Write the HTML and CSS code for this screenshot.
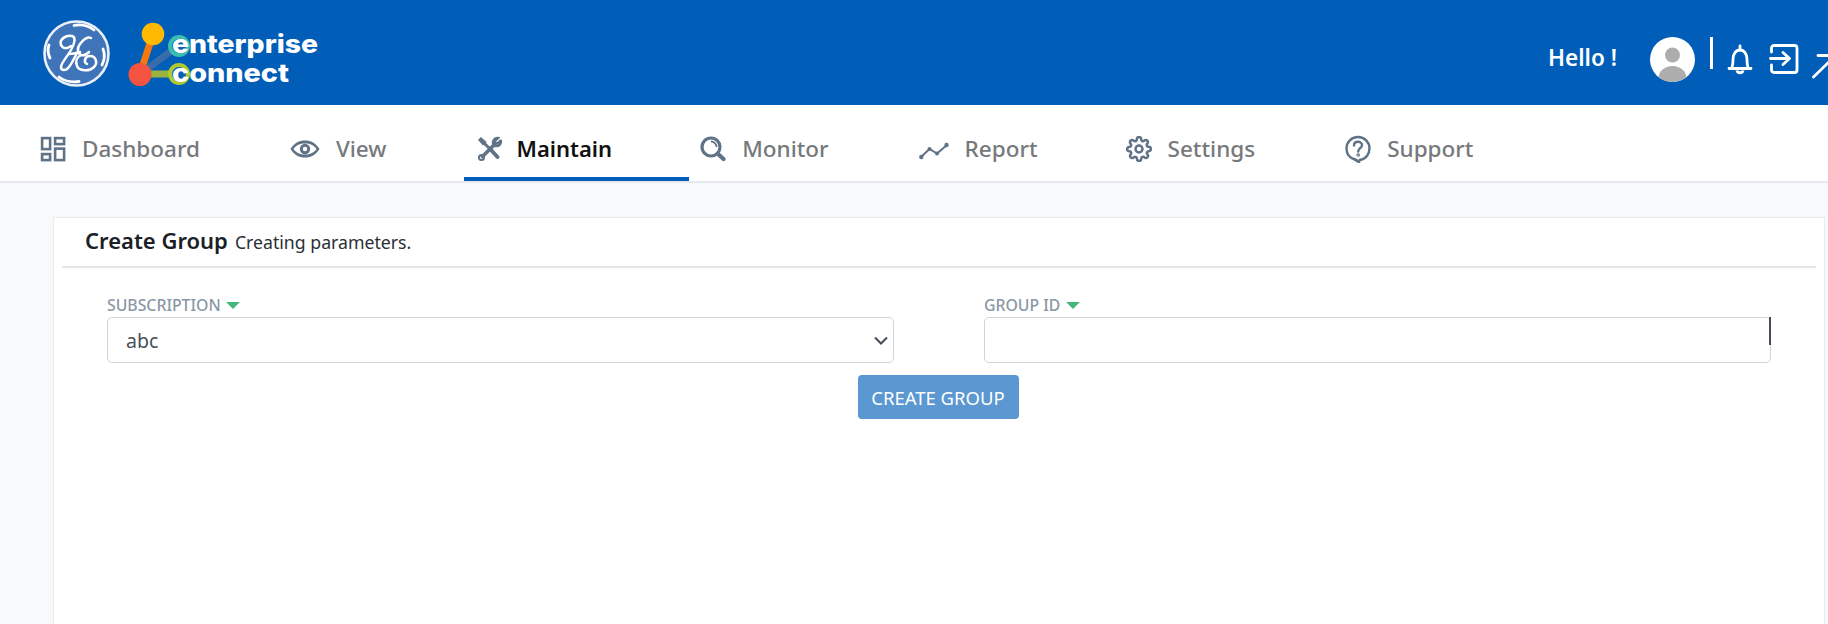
FILE: index.html
```html
<!DOCTYPE html>
<html lang="en">
<head>
<meta charset="utf-8">
<title>Create Group</title>
<link rel="stylesheet" href="styles.css">
</head>
<body>
<header class="topbar">
  <div class="brand">
    <svg class="ge-logo" width="68" height="68" viewBox="31 18 68 68" aria-label="GE">
      <circle cx="65.500" cy="52.500" r="32" fill="#3f74b9" stroke="#e9f0f8" stroke-width="2.600"/>
      <g fill="none" stroke="#fff" stroke-linecap="round">
        <path stroke-width="2.800" d="M63 24.500C70 23 78 25 83 29M68 80.500C60 81.500 53 80 48 76M38 44C36.500 48 37 53 39 57M92 48C94 53 94 58 91 64"/>
        <g stroke-width="2.500">
          <path d="M50 44C48 38 55 34 61 35C65 36 64 42 60 49C56 56 50 62 50 66C50 70 55 70 58 66C61 62 64 56 66 52"/>
          <path d="M50 44C52 48 56 48 60 45"/>
          <path d="M58 53C62 53 66 52 69 51"/>
          <path d="M80 37C76 35 72 39 69 43C66 47 66 52 70 54C73 55 76 53 78 51"/>
          <path d="M70 54C66 56 64 60 66 65C68 70 78 71 83 66C87 62 85 55 79 55C74 55 72 61 76 63"/>
        </g>
      </g>
    </svg>
    <svg class="ec-logo" width="194" height="72" viewBox="128 15 194 72" aria-label="enterprise connect">
      <path d="M153 32L140 72" stroke="#f47a10" stroke-width="7"/>
      <path d="M140 72L178 44" stroke="#3a6cab" stroke-width="7"/>
      <path d="M140 72H178" stroke="#9ab33c" stroke-width="7"/>
      <circle cx="153" cy="32" r="11.300" fill="#ffb900"/>
      <circle cx="140" cy="72.500" r="11.500" fill="#f4533f"/>
      <circle cx="179" cy="44" r="9" fill="#0a5fb4" stroke="#3bbdb0" stroke-width="4"/>
      <circle cx="179" cy="72" r="9" fill="#0a5fb4" stroke="#afc92e" stroke-width="4"/>
      <text class="ec-text" x="172" y="51" textLength="146" lengthAdjust="spacingAndGlyphs">enterprise</text>
      <text class="ec-text" x="172" y="80" textLength="117" lengthAdjust="spacingAndGlyphs">connect</text>
    </svg>
  </div>
  <div class="user">
    <span class="hello">Hello !</span>
    <svg class="avatar" width="45" height="45" viewBox="0 0 45 45">
      <defs><clipPath id="av"><circle cx="22.500" cy="22.500" r="22.500"/></clipPath></defs>
      <circle cx="22.500" cy="22.500" r="22.500" fill="#fff"/>
      <g clip-path="url(#av)" fill="#adadad">
        <circle cx="22.500" cy="18" r="7.500"/>
        <ellipse cx="22.500" cy="41" rx="14" ry="12"/>
      </g>
    </svg>
    <span class="divider"></span>
    <svg class="ic-bell" width="26" height="32" viewBox="0 0 26 32" fill="none" stroke="#fff" stroke-width="2.800">
      <path d="M2 24.500H24M4.500 24.500C6 22 6 20 6 15C6 10 9 6 13 6C17 6 20 10 20 15C20 20 20 22 21.500 24.500" stroke-linecap="round"/>
      <path d="M13 2V6" stroke-linecap="round"/>
      <path d="M10 26.500C10.500 29.500 15.500 29.500 16 26.500" stroke-width="2.800"/>
    </svg>
    <svg class="ic-exit" width="30" height="30" viewBox="0 0 30 30" fill="none" stroke="#fff" stroke-width="2.800" stroke-linecap="round" stroke-linejoin="round">
      <path d="M2.500 8V4C2.500 2.500 3.500 1.500 5 1.500H25.500C27 1.500 28 2.500 28 4V26C28 27.500 27 28.500 25.500 28.500H5C3.500 28.500 2.500 27.500 2.500 26V21"/>
      <path d="M1.500 14.500H20M14 8.500L20.500 14.500L14 20.500"/>
    </svg>
    <svg class="ic-arrow" width="26" height="26" viewBox="0 0 26 26" fill="none" stroke="#fff" stroke-width="2.800" stroke-linecap="round">
      <path d="M1.500 24L23 3M6 2.500H23V20"/>
    </svg>
  </div>
</header>

<nav class="tabs">
  <a class="tab">
    <svg class="tab-icon" width="26" height="26" viewBox="0 0 26 26" fill="none" stroke="#5f7286" stroke-width="2.600">
      <rect x="2.100" y="2.100" width="8" height="11"/>
      <rect x="15.100" y="2.100" width="9" height="6"/>
      <rect x="2.100" y="18.100" width="8" height="6"/>
      <rect x="15.100" y="12.600" width="9" height="11.500"/>
    </svg>
    <span>Dashboard</span>
  </a>
  <a class="tab">
    <svg class="tab-icon" width="30" height="26" viewBox="0 0 30 26">
      <path fill="#5f7286" fill-rule="evenodd" d="M.500 13C4 7 9 4.500 15 4.500S26 7 29.500 13C26 19 21 21.500 15 21.500S4 19 .500 13ZM3.500 13C6.500 17 10 18.500 15 18.500S23.500 17 26.500 13C23.500 9 20 7.500 15 7.500S6.500 9 3.500 13ZM15 7.800A5.200 5.200 0 1 1 15 18.200A5.200 5.200 0 1 1 15 7.800ZM15 10.800A2.200 2.200 0 1 0 15 15.200A2.200 2.200 0 1 0 15 10.800Z"/>
    </svg>
    <span>View</span>
  </a>
  <a class="tab tab-active">
    <svg class="tab-icon" width="26" height="26" viewBox="0 0 26 26" fill="none" stroke="#5f7286" stroke-linecap="round">
      <path stroke-width="3" d="M5 5L14 14"/>
      <path stroke-width="2.200" d="M2.500 4L4 2.500L8 6L6 8Z"/>
      <path stroke-width="4" d="M14.500 14.500L20.500 21"/>
      <path stroke-width="3.800" d="M17.500 8.500L5.500 20.500"/>
      <path stroke-width="2.400" d="M23.500 4.500L20.500 7.500L18.500 7L18 5L21 2C18 1.500 15.500 4 16 7.500M24 5C24.500 8 22 10.500 18.500 10"/>
      <circle cx="4.500" cy="21.500" r="2.500" stroke-width="2"/>
    </svg>
    <span>Maintain</span>
  </a>
  <a class="tab">
    <svg class="tab-icon" width="26" height="26" viewBox="0 0 26 26" fill="none" stroke="#5f7286">
      <circle cx="11" cy="11" r="9" stroke-width="3.200"/>
      <path stroke-width="1.800" d="M11 5.500C14 5.500 16.500 8 16.500 11"/>
      <path stroke-width="4.200" stroke-linecap="round" d="M18 18L23.500 23"/>
    </svg>
    <span>Monitor</span>
  </a>
  <a class="tab tab-report">
    <svg class="tab-icon" width="30" height="26" viewBox="0 0 30 26" fill="none" stroke="#5f7286" stroke-width="2">
      <path d="M2 21L10.500 13L18 17.500L28 9"/>
      <g fill="#5f7286" stroke="none">
        <circle cx="2.300" cy="21" r="2.200"/><circle cx="10.500" cy="13" r="2"/><circle cx="18" cy="17.500" r="2"/><circle cx="27.500" cy="9" r="2.200"/>
      </g>
    </svg>
    <span>Report</span>
  </a>
  <a class="tab">
    <svg class="tab-icon" width="26" height="26" viewBox="0 0 24 24" fill="none" stroke="#5f7286" stroke-width="2.300">
      <circle cx="12" cy="12" r="3.200"/>
      <path d="M19.400 15a1.650 1.650 0 0 0 .33 1.820l.06.06a2 2 0 0 1 0 2.830 2 2 0 0 1-2.830 0l-.06-.06a1.650 1.650 0 0 0-1.820-.33 1.650 1.650 0 0 0-1 1.510V21a2 2 0 0 1-2 2 2 2 0 0 1-2-2v-.09A1.650 1.650 0 0 0 9 19.400a1.650 1.650 0 0 0-1.820.33l-.06.06a2 2 0 0 1-2.830 0 2 2 0 0 1 0-2.830l.06-.06a1.650 1.650 0 0 0 .33-1.820 1.650 1.650 0 0 0-1.510-1H3a2 2 0 0 1-2-2 2 2 0 0 1 2-2h.09A1.650 1.650 0 0 0 4.600 9a1.650 1.650 0 0 0-.33-1.820l-.06-.06a2 2 0 0 1 0-2.830 2 2 0 0 1 2.830 0l.06.06a1.650 1.650 0 0 0 1.820.33H9a1.650 1.650 0 0 0 1-1.510V3a2 2 0 0 1 2-2 2 2 0 0 1 2 2v.09a1.650 1.650 0 0 0 1 1.510 1.650 1.650 0 0 0 1.820-.33l.06-.06a2 2 0 0 1 2.830 0 2 2 0 0 1 0 2.830l-.06.06a1.650 1.650 0 0 0-.33 1.820V9a1.650 1.650 0 0 0 1.510 1H21a2 2 0 0 1 2 2 2 2 0 0 1-2 2h-.09a1.650 1.650 0 0 0-1.510 1z"/>
    </svg>
    <span>Settings</span>
  </a>
  <a class="tab">
    <svg class="tab-icon" width="26" height="28" viewBox="0 0 26 28" fill="none" stroke="#5f7286" stroke-width="2.400" stroke-linecap="round">
      <path d="M14.500 25C21 24 24.500 19 24.500 13.500C24.500 7 19.500 2 13 2S1.500 7 1.500 13.500C1.500 19 5 23 10 24.500"/>
      <path stroke-width="2.800" d="M10 24.500L14 27"/>
      <path d="M9 10.500C9 8 11 6.800 13 6.800C15.500 6.800 17 8.500 17 10.300C17 13 13.200 13.500 13.200 16.500"/>
      <circle cx="13.200" cy="20" r=".6"/>
    </svg>
    <span>Support</span>
  </a>
</nav>

<main class="content">
  <section class="card">
    <div class="card-head">
      <h1 class="card-title">Create Group</h1>
      <span class="card-sub">Creating parameters.</span>
    </div>
    <form class="form">
      <div class="form-grid">
        <div class="field">
          <label class="field-label" for="sub">SUBSCRIPTION <i class="caret"></i></label>
          <div class="control-wrap">
            <select id="sub" class="control control-select"><option>abc</option></select>
            <svg class="chevron" width="14" height="9" viewBox="0 0 14 9" fill="none" stroke="#444b55" stroke-width="2"><path d="M1 1.500L7 7.500L13 1.500"/></svg>
          </div>
        </div>
        <div class="field">
          <label class="field-label" for="gid">GROUP ID <i class="caret"></i></label>
          <div class="control-wrap">
            <input id="gid" class="control" type="text">
            <span class="scroll-mark"></span>
          </div>
        </div>
      </div>
      <div class="actions">
        <button type="button" class="btn">CREATE GROUP</button>
      </div>
    </form>
  </section>
</main>
</body>
</html>
```

FILE: styles.css
```css
* { box-sizing: border-box; }
html, body { margin: 0; height: 624px; overflow: hidden; }
body {
  background: #f8f9fb;
  font-family: "Noto Sans", "Open Sans", sans-serif;
  color: #212529;
}

.topbar {
  height: 105px;
  background: #005eb8;
  display: flex;
  align-items: center;
  justify-content: space-between;
  overflow: hidden;
}
.brand { display: flex; align-items: center; padding-left: 42px; gap: 18px; }
.ge-logo { display: block; }
.ec-logo { display: block; }
.ec-text { font-family: Inter, "Liberation Sans", sans-serif; font-weight: 800; font-size: 25.500px; fill: #fff; }

.user { display: flex; align-items: center; width: 280px; flex: none; padding-top: 12px; }
.hello { font-size: 22.500px; font-weight: 600; color: #fff; width: 102px; flex: none; padding-bottom: 2px; }
.avatar { flex: none; display: block; margin-top: 1px; }
.divider { width: 3px; height: 32px; background: #fff; margin-left: 15px; margin-bottom: 11px; flex: none; }
.ic-bell { margin-left: 14px; flex: none; margin-top: 3px; }
.ic-exit { margin-left: 16px; flex: none; margin-top: 1px; }
.ic-arrow { margin-left: 13px; flex: none; margin-top: 14px; }

.tabs {
  height: 78px;
  background: #fff;
  border-bottom: 2px solid #e6eaef;
  display: flex;
  padding-left: 27px;
}
.tab {
  display: flex;
  align-items: center;
  gap: 16px;
  padding: 16px 77px 0 13px;
  height: 76px;
  font-size: 22.500px;
  font-weight: 500;
  color: #76797c;
  border-bottom: 4px solid transparent;
  flex: none;
}
.tab span { padding-bottom: 2px; }
.tab-report { padding-right: 75px; }
.tab-active {
  color: #111;
  font-size: 22px;
  font-weight: 600;
  gap: 14px;
  padding-right: 77px;
  margin-right: -2px;
  border-bottom-color: #005eb8;
}
.tab-icon { flex: none; display: block; }

.content { padding: 34px 3px 0 53px; }
.card {
  background: #fff;
  border: 1px solid #e9ecef;
  border-bottom: 0;
  height: 407px;
  padding: 0 8px;
}
.card-head {
  height: 50px;
  border-bottom: 2px solid #e6e6e6;
  padding: 6px 23px 0;
  display: flex;
  align-items: baseline;
  gap: 7px;
}
.card-title { margin: 0; font-size: 22px; font-weight: 600; color: #1b2026; line-height: 32px; }
.card-sub { font-size: 17.700px; color: #2b3036; }

.form { padding: 26px 45px 0; }
.form-grid { display: grid; grid-template-columns: 787px 787px; column-gap: 90px; }
.field-label {
  display: block;
  font-size: 15.800px;
  font-weight: 500;
  line-height: 23px;
  color: #8a97a5;
}
.caret {
  display: inline-block;
  border-left: 7.500px solid transparent;
  border-right: 7.500px solid transparent;
  border-top: 7px solid #45b97c;
  margin-left: 1px;
  vertical-align: 2px;
}
.control-wrap { position: relative; }
.control {
  display: block;
  width: 100%;
  height: 46px;
  border: 1px solid #ced4da;
  border-radius: 5px;
  background: #fff;
  font-family: inherit;
  font-size: 19.500px;
  color: #495057;
  padding: 0 18px;
  outline: none;
}
.control-select { appearance: none; -webkit-appearance: none; }
.chevron { position: absolute; right: 6px; top: 19px; pointer-events: none; }
.scroll-mark { position: absolute; right: 0; top: 0; width: 2px; height: 28px; background: #454c57; }

.actions { display: flex; justify-content: center; margin-top: 12px; padding-right: 2px; }
.btn {
  width: 161px;
  height: 44px;
  background: #5b97d1;
  border: 0;
  border-radius: 4px;
  color: #fff;
  font-family: inherit;
  font-size: 18.500px;
  padding: 0;
}
```
